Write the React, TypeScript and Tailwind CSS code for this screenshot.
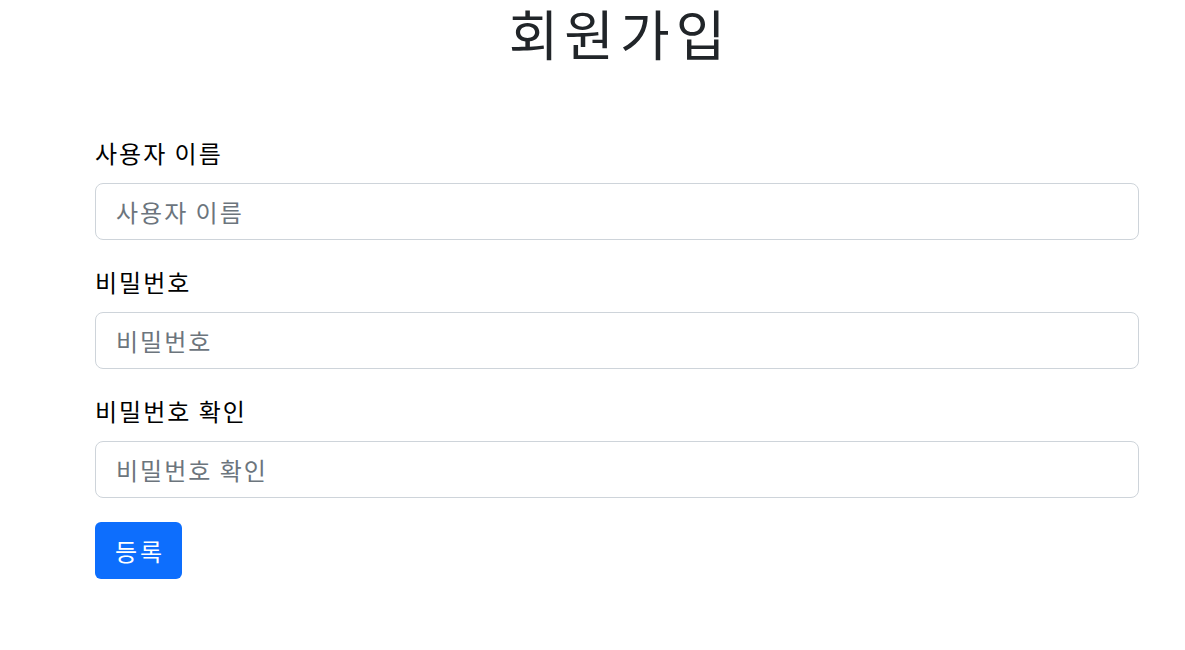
export default function App() {
  const fields = [
    { id: "username", label: "사용자 이름", type: "text" },
    { id: "password", label: "비밀번호", type: "password" },
    { id: "confirm", label: "비밀번호 확인", type: "password" },
  ];

  return (
    <div
      className="min-h-screen bg-white text-[#212529]"
      style={{ fontFamily: '"Noto Sans CJK KR", "Noto Sans", sans-serif' }}
    >
      <div className="ml-[95px] w-[1044px]">
        <h1 className="pl-[6px] text-center text-[54px] leading-[66px] tracking-[6px] font-normal">
          회원가입
        </h1>

        <form className="mt-[72px]" onSubmit={(e) => e.preventDefault()}>
          {fields.map((f) => (
            <div key={f.id} className="mb-[27px]">
              <label
                htmlFor={f.id}
                className="block text-[24px] leading-[30px] tracking-[2px] text-black mb-[15px]"
              >
                {f.label}
              </label>
              <input
                id={f.id}
                type={f.type}
                placeholder={f.label}
                className="block w-full h-[57px] px-[20px] text-[24px] tracking-[2px] border border-[#ced4da] rounded-lg placeholder:text-[#6c757d] outline-none"
              />
            </div>
          ))}
          <button
            type="submit"
            className="-mt-[3px] h-[57px] w-[87px] rounded-md bg-[#0d6efd] pl-[3px] text-white text-[24px] tracking-[3px]"
          >
            등록
          </button>
        </form>
      </div>
    </div>
  );
}
